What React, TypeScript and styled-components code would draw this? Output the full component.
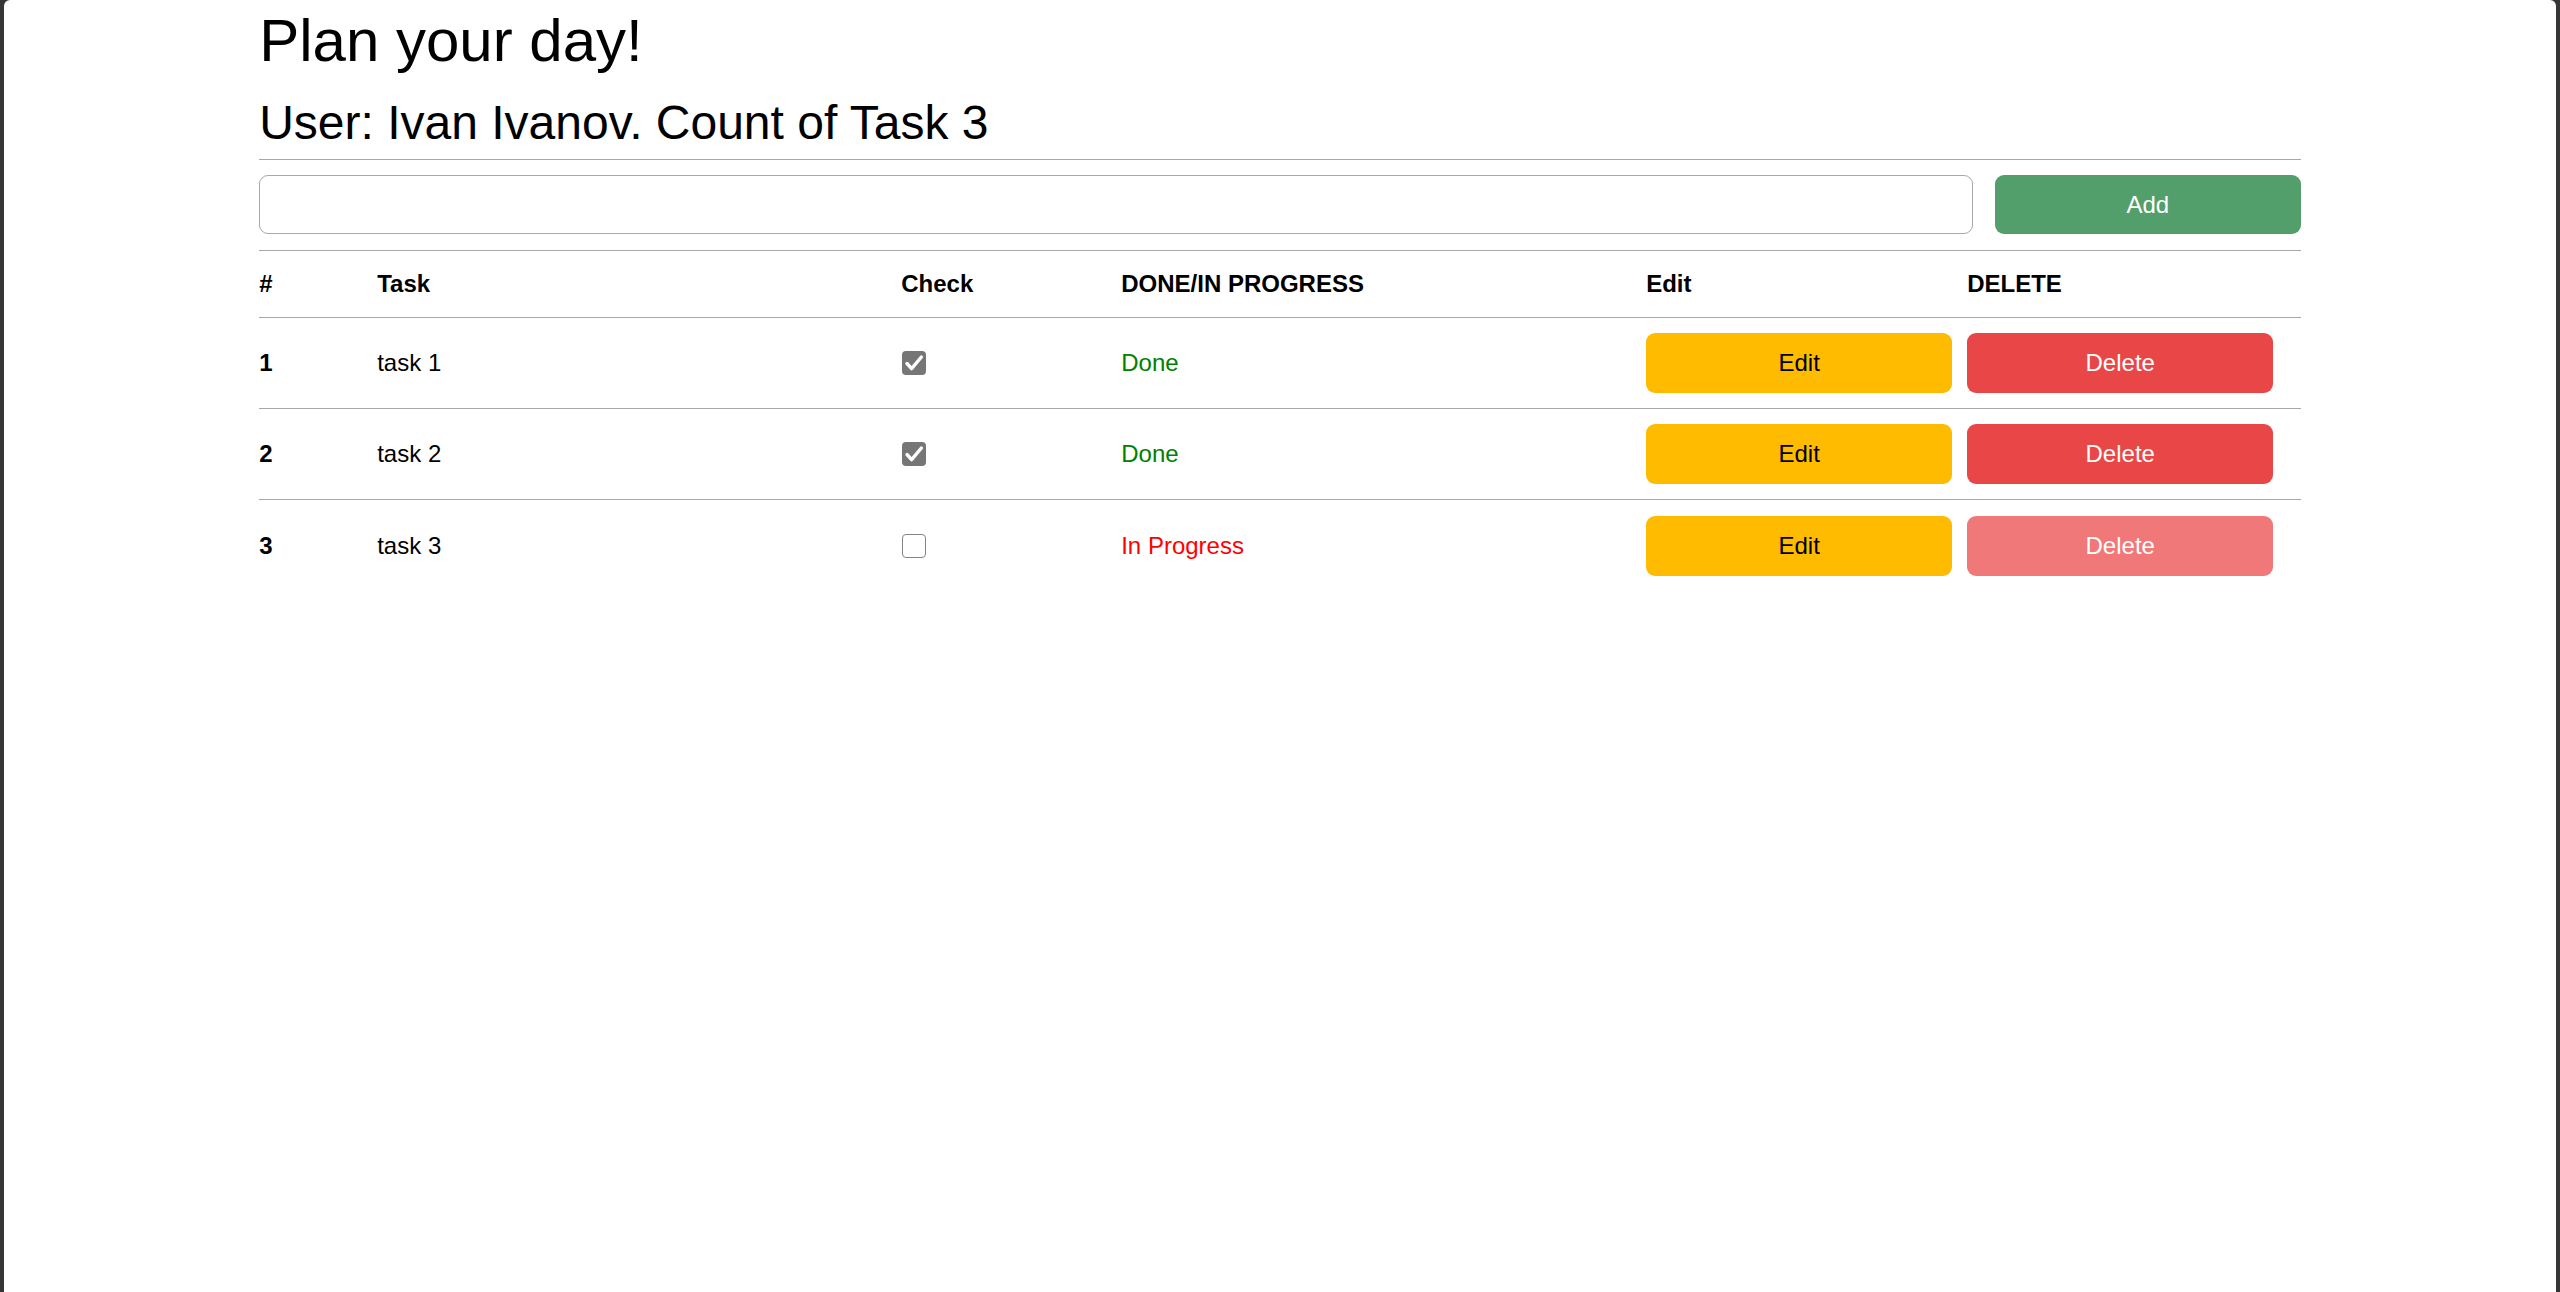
import React from 'react';
import styled, { createGlobalStyle } from 'styled-components';

const GlobalStyle = createGlobalStyle`
  html, body { margin: 0; padding: 0; }
  body {
    font-family: "Liberation Sans", Arial, sans-serif;
    background: #353535;
    color: #000;
  }
  * { box-sizing: border-box; }
`;

const Frame = styled.div`
  min-height: 1292px;
  padding: 0 4px;
  background: #353535;
  display: flex;
`;

const Page = styled.div`
  flex: 1;
  background: #fff;
  border-radius: 6px 6px 0 0;
`;

const Container = styled.main`
  width: 80%;
  margin: 0 auto;
  padding-top: 5px;
`;

const Title = styled.h1`
  margin: 0;
  font-size: 60px;
  font-weight: 400;
  line-height: 72px;
`;

const Subtitle = styled.h2`
  margin: 17px 0 0;
  font-size: 48px;
  font-weight: 400;
  line-height: 58px;
`;

const Divider = styled.hr`
  margin: 7px 0 0;
  border: 0;
  border-top: 1px solid #a8a8a8;
`;

const AddForm = styled.form`
  display: flex;
  gap: 22px;
  margin-top: 15px;
`;

const TaskInput = styled.input`
  flex: 1;
  height: 59px;
  border: 1px solid #a8a8a8;
  border-radius: 9px;
  font-family: inherit;
  font-size: 24px;
  padding: 0 18px;
  outline: none;
`;

const ActionButton = styled.button<{ $variant: 'add' | 'edit' | 'delete'; $faded?: boolean }>`
  width: 306px;
  height: ${p => (p.$variant === 'add' ? 59 : 60)}px;
  border: 0;
  border-radius: 9px;
  font-family: inherit;
  font-size: 24px;
  cursor: pointer;
  color: ${p => (p.$variant === 'edit' ? '#000' : '#fff')};
  background: ${p =>
    p.$variant === 'add'
      ? '#529f6c'
      : p.$variant === 'edit'
      ? '#ffbb00'
      : p.$faded
      ? '#f07878'
      : '#e94747'};
`;

const Table = styled.div`
  margin-top: 16px;
  border-top: 1px solid #a8a8a8;
`;

const Row = styled.div<{ $header?: boolean }>`
  display: grid;
  grid-template-columns: 118px 524px 220px 525px 321px 1fr;
  align-items: center;
  height: ${p => (p.$header ? 67 : 91)}px;
  border-bottom: 1px solid #a8a8a8;
  font-size: 24px;
  font-weight: ${p => (p.$header ? 700 : 400)};
  &:last-child {
    border-bottom: 0;
  }
`;

const Cell = styled.div<{ $bold?: boolean }>`
  display: flex;
  align-items: center;
  font-weight: ${p => (p.$bold ? 700 : 'inherit')};
`;

const Status = styled.span<{ $done: boolean }>`
  color: ${p => (p.$done ? '#008000' : '#ff0000')};
`;

const CheckBox = styled.span<{ $checked: boolean }>`
  display: inline-flex;
  align-items: center;
  justify-content: center;
  width: 24px;
  height: 24px;
  margin-left: 1px;
  border-radius: 4px;
  background: ${p => (p.$checked ? '#767676' : '#fff')};
  border: ${p => (p.$checked ? '0' : '1.5px solid #858585')};
`;

const tasks = [
  { id: 1, name: 'task 1', done: true },
  { id: 2, name: 'task 2', done: true },
  { id: 3, name: 'task 3', done: false },
];

const CheckMark = () => (
  <svg width="24" height="24" viewBox="0 0 24 24">
    <path d="M5 12.5 L9.6 17.6 L19.4 6" fill="none" stroke="#fff" strokeWidth="3.4" strokeLinecap="round" strokeLinejoin="round" />
  </svg>
);

export default function App() {
  return (
    <>
      <GlobalStyle />
      <Frame>
        <Page>
          <Container>
            <Title>Plan your day!</Title>
            <Subtitle>User: Ivan Ivanov. Count of Task {tasks.length}</Subtitle>
            <Divider />
            <AddForm onSubmit={e => e.preventDefault()}>
              <TaskInput type="text" />
              <ActionButton $variant="add" type="submit">Add</ActionButton>
            </AddForm>
            <Table>
              <Row $header>
                <Cell>#</Cell>
                <Cell>Task</Cell>
                <Cell>Check</Cell>
                <Cell>DONE/IN PROGRESS</Cell>
                <Cell>Edit</Cell>
                <Cell>DELETE</Cell>
              </Row>
              {tasks.map(t => (
                <Row key={t.id}>
                  <Cell $bold>{t.id}</Cell>
                  <Cell>{t.name}</Cell>
                  <Cell>
                    <CheckBox $checked={t.done}>{t.done && <CheckMark />}</CheckBox>
                  </Cell>
                  <Cell>
                    <Status $done={t.done}>{t.done ? 'Done' : 'In Progress'}</Status>
                  </Cell>
                  <Cell>
                    <ActionButton $variant="edit" type="button">Edit</ActionButton>
                  </Cell>
                  <Cell>
                    <ActionButton $variant="delete" $faded={!t.done} type="button">Delete</ActionButton>
                  </Cell>
                </Row>
              ))}
            </Table>
          </Container>
        </Page>
      </Frame>
    </>
  );
}
